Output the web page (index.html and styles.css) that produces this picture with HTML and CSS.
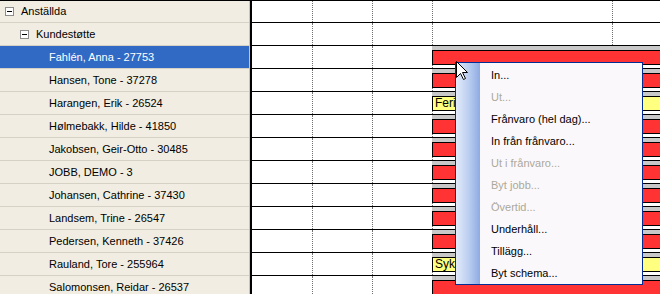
FILE: index.html
```html
<!DOCTYPE html>
<html lang="sv">
<head>
<meta charset="UTF-8">
<title>Planering</title>
<link rel="stylesheet" href="styles.css">
</head>
<body>
<div class="window">
  <ul class="tree">
    <li class="lvl0"><span class="toggle"></span>Anställda</li>
    <li class="lvl1"><span class="toggle"></span>Kundestøtte</li>
    <li class="lvl2 selected">Fahlén, Anna - 27753</li>
    <li class="lvl2">Hansen, Tone - 37278</li>
    <li class="lvl2">Harangen, Erik - 26524</li>
    <li class="lvl2">Hølmebakk, Hilde - 41850</li>
    <li class="lvl2">Jakobsen, Geir-Otto - 30485</li>
    <li class="lvl2">JOBB, DEMO - 3</li>
    <li class="lvl2">Johansen, Cathrine - 37430</li>
    <li class="lvl2">Landsem, Trine - 26547</li>
    <li class="lvl2">Pedersen, Kenneth - 37426</li>
    <li class="lvl2">Rauland, Tore - 255964</li>
    <li class="lvl2">Salomonsen, Reidar - 26537</li>
  </ul>
  <div class="split"></div>
  <div class="plan">
    <div class="prow">
      <div class="slot"></div><div class="slot dot"></div><div class="slot dot"></div>
      <div class="slot wide dot"></div><div class="slot rest dot"></div>
    </div>
    <div class="prow">
      <div class="slot"></div><div class="slot dot"></div><div class="slot dot"></div>
      <div class="slot wide dot"></div><div class="slot rest dot"></div>
    </div>
    <div class="prow">
      <div class="slot"></div><div class="slot dot"></div><div class="slot dot"></div>
      <div class="shift"><div class="band"></div><div class="fill work"></div></div>
    </div>
    <div class="prow">
      <div class="slot"></div><div class="slot dot"></div><div class="slot dot"></div>
      <div class="shift"><div class="band"></div><div class="fill work"></div></div>
    </div>
    <div class="prow">
      <div class="slot"></div><div class="slot dot"></div><div class="slot dot"></div>
      <div class="shift"><div class="band"></div><div class="fill absent">Ferie</div></div>
    </div>
    <div class="prow">
      <div class="slot"></div><div class="slot dot"></div><div class="slot dot"></div>
      <div class="shift"><div class="band"></div><div class="fill work"></div></div>
    </div>
    <div class="prow">
      <div class="slot"></div><div class="slot dot"></div><div class="slot dot"></div>
      <div class="shift"><div class="band"></div><div class="fill work"></div></div>
    </div>
    <div class="prow">
      <div class="slot"></div><div class="slot dot"></div><div class="slot dot"></div>
      <div class="shift"><div class="band"></div><div class="fill work"></div></div>
    </div>
    <div class="prow">
      <div class="slot"></div><div class="slot dot"></div><div class="slot dot"></div>
      <div class="shift"><div class="band"></div><div class="fill work"></div></div>
    </div>
    <div class="prow">
      <div class="slot"></div><div class="slot dot"></div><div class="slot dot"></div>
      <div class="shift"><div class="band"></div><div class="fill work"></div></div>
    </div>
    <div class="prow">
      <div class="slot"></div><div class="slot dot"></div><div class="slot dot"></div>
      <div class="shift"><div class="band"></div><div class="fill work"></div></div>
    </div>
    <div class="prow">
      <div class="slot"></div><div class="slot dot"></div><div class="slot dot"></div>
      <div class="shift"><div class="band"></div><div class="fill absent">Syk</div></div>
    </div>
    <div class="prow">
      <div class="slot"></div><div class="slot dot"></div><div class="slot dot"></div>
      <div class="shift"><div class="band"></div><div class="fill work"></div></div>
    </div>
  </div>

  <!-- context menu -->
  <div class="menu">
    <div class="gutter"></div>
    <ul class="items">
      <li>In...</li>
      <li class="off">Ut...</li>
      <li>Frånvaro (hel dag)...</li>
      <li>In från frånvaro...</li>
      <li class="off">Ut i frånvaro...</li>
      <li class="off">Byt jobb...</li>
      <li class="off">Övertid...</li>
      <li>Underhåll...</li>
      <li>Tillägg...</li>
      <li>Byt schema...</li>
    </ul>
  </div>
  <svg class="cursor" width="13" height="21" viewBox="0 0 13 21">
    <path d="M0.5 0.5 L0.5 16.5 L4.5 12.5 L7.5 18.5 L9.5 17.5 L6.5 11.5 L11.5 11.5 Z" fill="#fff" stroke="#000" stroke-width="1"/>
  </svg>
</div>
</body>
</html>
```

FILE: styles.css
```css
* {
  margin: 0;
  padding: 0;
  box-sizing: border-box;
}
body {
  width: 660px;
  height: 294px;
  overflow: hidden;
  background: #fff;
  font-family: "Liberation Sans", Arial, sans-serif;
  font-size: 11px;
}
li {
  list-style-type: none;
}
.window {
  position: relative;
  display: flex;
  height: 294px;
  border-top: 1px solid #000;
}

/* tree on the left */
.tree {
  width: 250px;
  flex: none;
  background: #f1ede2;
  border-right: 1px solid #c9c5b9;
}
.tree li {
  height: 23px;
  line-height: 22px;
  border-bottom: 1px solid #d5d1c5;
  color: #000;
  white-space: nowrap;
  display: flex;
  align-items: center;
}
.tree li:first-child {
  height: 22px;
  line-height: 21px;
}
.tree .lvl0 { padding-left: 5px; }
.tree .lvl1 { padding-left: 20px; }
.tree .lvl2 { padding-left: 49px; }
.tree li.selected {
  background: #316ac5;
  color: #fff;
}
.toggle {
  position: relative;
  width: 9px;
  height: 9px;
  border: 1px solid #8c8c8c;
  background: #fff;
  margin-right: 7px;
}
.toggle::after {
  content: "";
  position: absolute;
  left: 1px;
  top: 3px;
  width: 5px;
  height: 1px;
  background: #000;
}
.split {
  width: 2px;
  flex: none;
  background: #000;
}

/* planning grid */
.plan {
  flex: 1;
  background: #fff;
}
.prow {
  display: flex;
  height: 23px;
  border-bottom: 1px solid #000;
}
.prow:first-child {
  height: 22px;
}
.slot {
  width: 60px;
  flex: none;
}
.slot.wide {
  width: 180px;
}
.slot.rest {
  flex: 1;
}
.dot {
  border-left: 1px dotted #707070;
}
.shift {
  flex: 1;
  border-left: 1px dotted #707070;
}
.band {
  height: 4px;
  margin-left: -1px;
  background: #c8c8c8;
}
.fill {
  height: 15px;
  margin-left: -1px;
  border: 1px solid #000;
  border-right: none;
  font-size: 12px;
  line-height: 13px;
  padding-left: 2px;
  overflow: hidden;
}
.fill.work {
  background: #ff3333;
}
.fill.absent {
  background: #ffff80;
}

/* context menu */
.menu {
  position: absolute;
  left: 455px;
  top: 61px;
  width: 188px;
  height: 223px;
  display: flex;
  border: 1px solid #002d96;
  padding-top: 1px;
  background: #fbf8fc;
}
.gutter {
  width: 24px;
  flex: none;
  margin-top: -1px;
  background: linear-gradient(to right, #e3ebf9, #b9cdf0 55%, #8eaae2);
}
.items {
  flex: 1;
}
.items li {
  height: 22px;
  line-height: 22px;
  padding-left: 11px;
  color: #000;
  font-size: 11px;
}
.items li.off {
  color: #aca899;
}
.cursor {
  position: absolute;
  left: 456px;
  top: 60px;
}
```
